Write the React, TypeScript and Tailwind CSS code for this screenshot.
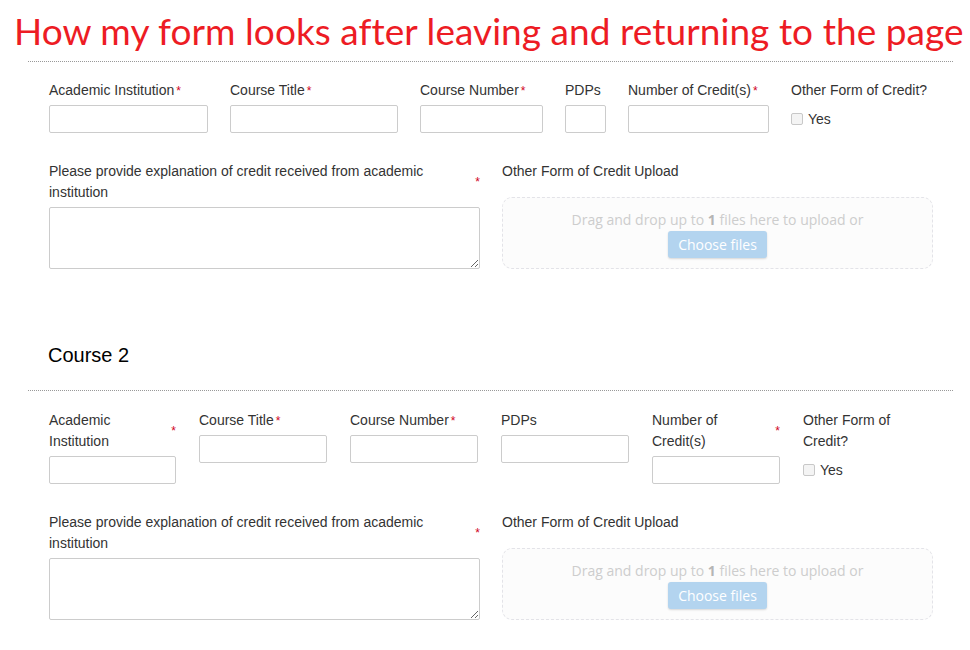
import React from 'react';

const Req: React.FC = () => (
  <span className="ml-[2px] shrink-0 text-[12px] leading-none text-[#d0021b]">*</span>
);

interface FieldProps {
  label: string;
  width: string;
  required?: boolean;
}

const Field: React.FC<FieldProps> = ({ label, width, required }) => (
  <div className={`${width} shrink-0`}>
    <label className="mb-[4px] flex items-center text-[14px] leading-[21px] text-[#333]">
      <span>{label}</span>
      {required && <Req />}
    </label>
    <input
      type="text"
      className="block h-[28px] w-full rounded-[2px] border border-[#ccc] bg-white px-2 text-[14px] outline-none"
    />
  </div>
);

const OtherCredit: React.FC<{ width: string }> = ({ width }) => (
  <div className={`${width} shrink-0`}>
    <div className="mb-[4px] text-[14px] leading-[21px] text-[#333]">Other Form of Credit?</div>
    <label className="flex h-[28px] items-center gap-[5px] text-[14px] text-[#333]">
      <span className="block h-[12px] w-[12px] rounded-[2px] border border-[#c8c8c8] bg-[#f4f4f4]" />
      Yes
    </label>
  </div>
);

const ExplainRow: React.FC = () => (
  <div className="mt-[28px] flex items-start gap-[22px]">
    <div className="w-[431px] shrink-0">
      <label className="mb-[4px] flex items-center text-[14px] leading-[21px] text-[#333]">
        <span className="pr-[4px]">
          Please provide explanation of credit received from academic institution
        </span>
        <Req />
      </label>
      <textarea className="block h-[62px] w-full rounded-[2px] border border-[#ccc] bg-white px-2 py-1 text-[14px] outline-none" />
    </div>
    <div className="w-[431px] shrink-0">
      <div className="text-[14px] leading-[21px] text-[#333]">Other Form of Credit Upload</div>
      <div
        className="mt-[15px] flex h-[72px] flex-col items-center rounded-[10px] border border-dashed border-[#e3e3e8] bg-[#fcfcfc] pt-[12px]"
        style={{ fontFamily: '"Open Sans", sans-serif' }}
      >
        <div className="text-[14px] leading-[20px] text-[#cdcdcd]">
          Drag and drop up to <b className="font-bold text-[#b5b5b5]">1</b> files here to upload or
        </div>
        <button className="mt-[1px] h-[27px] rounded-[3px] bg-[#b3d4ef] px-[10px] text-[14px] font-medium text-white shadow-[0_1px_2px_rgba(0,0,0,0.15)]">
          Choose files
        </button>
      </div>
    </div>
  </div>
);

const App: React.FC = () => {
  return (
    <div className="min-h-[650px] bg-white" style={{ fontFamily: '"Liberation Sans", Arial, sans-serif' }}>
      <h1
        className="pl-[14px] pt-[11px] text-[37px] leading-[40px] tracking-[0.05px] text-[#ed1c24]"
        style={{ fontFamily: 'Lato, "Open Sans", sans-serif' }}
      >
        How my form looks after leaving and returning to the page
      </h1>

      <div className="ml-[28px] mt-[10px] w-[925px]">
        <div className="border-t border-dotted border-[#999]" />
        <div className="pl-[21px] pt-[18px]">
          <div className="flex items-start gap-[22px]">
            <Field label="Academic Institution" width="w-[159px]" required />
            <Field label="Course Title" width="w-[168px]" required />
            <Field label="Course Number" width="w-[123px]" required />
            <Field label="PDPs" width="w-[41px]" />
            <Field label="Number of Credit(s)" width="w-[141px]" required />
            <OtherCredit width="w-[150px]" />
          </div>
          <ExplainRow />
        </div>

        <h2 className="mt-[72px] pl-[20px] text-[20px] leading-[28px] text-black">Course 2</h2>

        <div className="mt-[21px] border-t border-dotted border-[#999]" />
        <div className="pl-[21px] pt-[19px]">
          <div className="flex items-start gap-[23px]">
            <Field label="Academic Institution" width="w-[127px]" required />
            <Field label="Course Title" width="w-[128px]" required />
            <Field label="Course Number" width="w-[128px]" required />
            <Field label="PDPs" width="w-[128px]" />
            <Field label="Number of Credit(s)" width="w-[128px]" required />
            <OtherCredit width="w-[128px]" />
          </div>
          <ExplainRow />
        </div>
      </div>
    </div>
  );
};

export default App;
